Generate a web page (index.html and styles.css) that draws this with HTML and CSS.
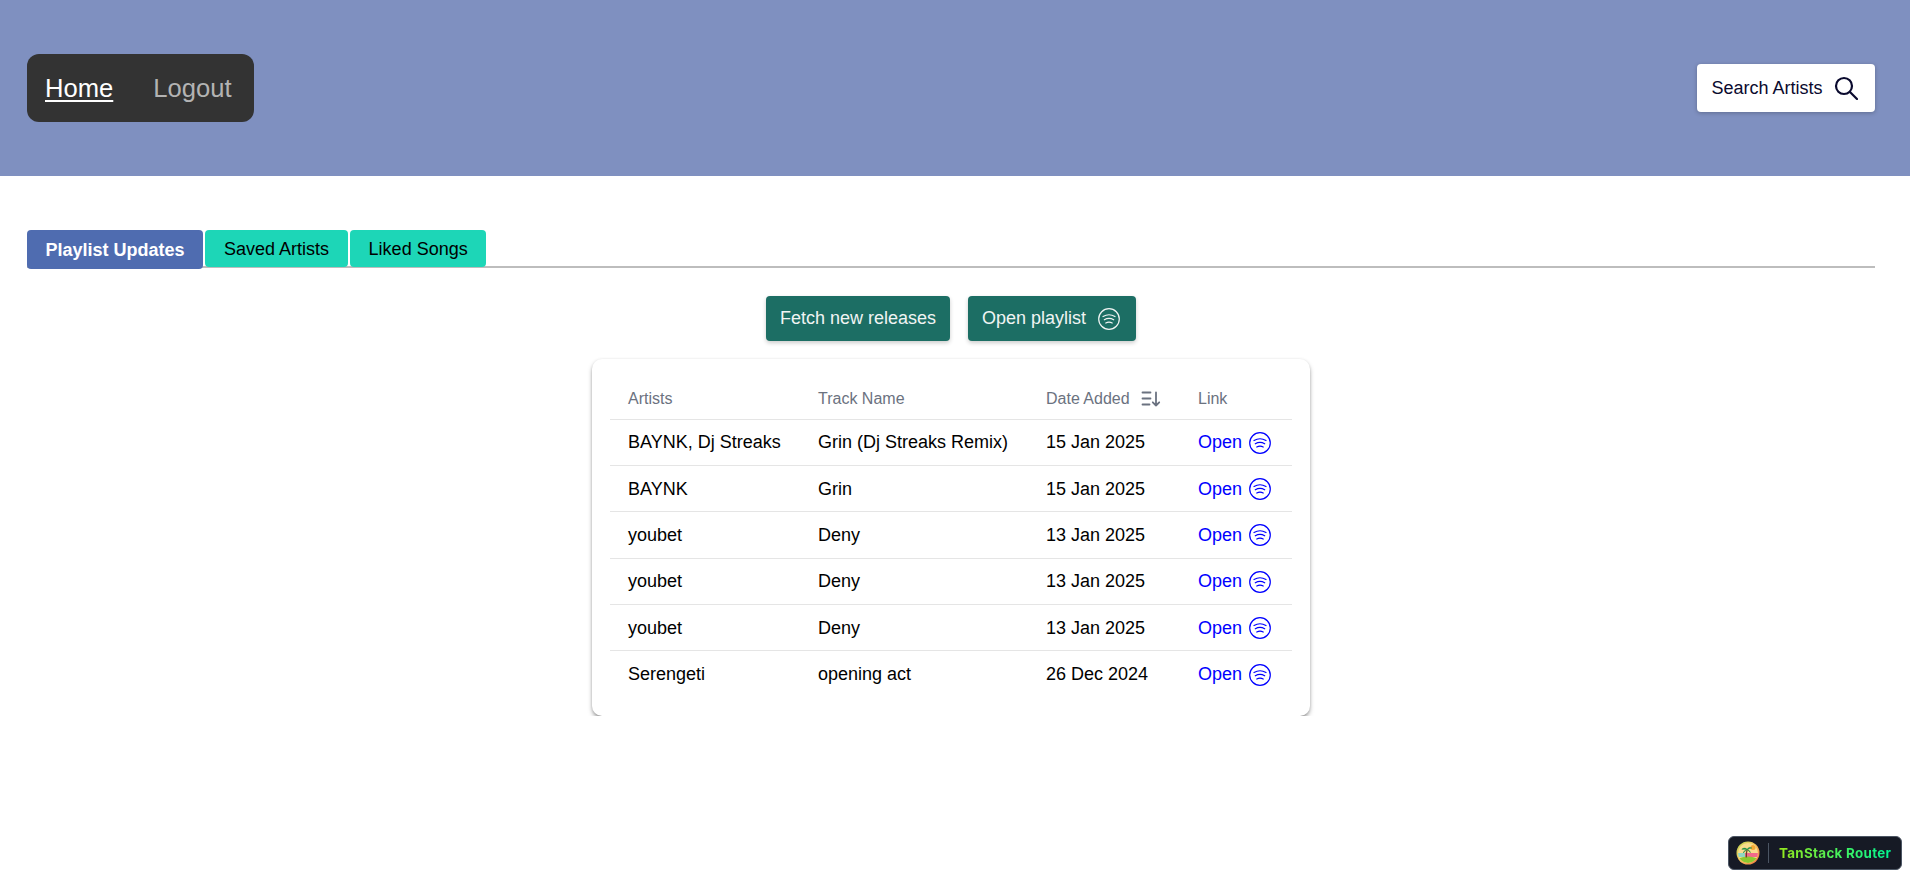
FILE: index.html
```html
<!DOCTYPE html>
<html lang="en">
<head>
    <meta charset="UTF-8">
    <title>Playlist Updates</title>
    <link rel="stylesheet" href="styles.css">
</head>
<body>

    <!-- Header Section -->
    <header class="top-bar">
        <nav class="main-nav">
            <a href="#" class="active">Home</a>
            <a href="#">Logout</a>
        </nav>
        <button class="search-btn" type="button">
            Search Artists
            <svg width="24" height="24" viewBox="0 0 24 24" fill="none" stroke="currentColor" stroke-width="2.200" stroke-linecap="round"><circle cx="10" cy="10" r="8"/><path d="M16 16l7 7"/></svg>
        </button>
    </header>

    <!-- Tabs -->
    <main class="content">
        <div class="tabs">
            <button class="tab tab-active" type="button">Playlist Updates</button>
            <button class="tab" type="button">Saved Artists</button>
            <button class="tab tab-last" type="button">Liked Songs</button>
        </div>

        <div class="actions">
            <button class="action-btn" type="button">Fetch new releases</button>
            <button class="action-btn open-btn" type="button">
                Open playlist
                <svg class="spotify" viewBox="0 0 24 24" fill="none" stroke="currentColor" stroke-width="1.200" stroke-linecap="round"><circle cx="12" cy="12" r="10.300"/><path d="M6 9.500c3.800-2.200 8.200-2.200 12 0M7.300 12.800c3-1.700 6.400-1.700 9.400 0M8.800 16c2-1.100 4.400-1.100 6.400 0"/></svg>
            </button>
        </div>

        <!-- Results table -->
        <div class="table-card">
            <table>
                <thead>
                    <tr>
                        <th class="col-artist">Artists</th>
                        <th class="col-track">Track Name</th>
                        <th class="col-date">
                            <span class="sort-head">Date Added
                                <svg width="20" height="20" viewBox="0 0 20 20" fill="none" stroke="currentColor" stroke-width="1.800" stroke-linecap="round" stroke-linejoin="round"><path d="M1.500 3.500h8M1.500 9.500h8M1.500 15.500h7M15 3.500v13M11.800 13.300l3.200 3.200 3.200-3.200"/></svg>
                            </span>
                        </th>
                        <th>Link</th>
                    </tr>
                </thead>
                <tbody id="rows"></tbody>
            </table>
        </div>
    </main>

    <!-- Router devtools badge -->
    <button class="router-badge" type="button">
        <svg class="badge-logo" width="24" height="24" viewBox="0 0 24 24">
            <defs>
                <linearGradient id="sky" x1="0" y1="0" x2="1" y2="1">
                    <stop offset="0" stop-color="#b5d850"/>
                    <stop offset="0.45" stop-color="#f7c860"/>
                    <stop offset="1" stop-color="#f0703c"/>
                </linearGradient>
                <clipPath id="disc"><circle cx="12" cy="12" r="10"/></clipPath>
            </defs>
            <circle cx="12" cy="12" r="11.500" fill="url(#sky)"/>
            <g clip-path="url(#disc)">
                <rect width="24" height="24" fill="#f9dc8c"/>
                <rect x="9" y="12" width="15" height="4" fill="#f2688a"/>
                <rect y="12" width="9" height="4" fill="#8fd8c0"/>
                <circle cx="17" cy="6.500" r="2.500" fill="#f6a935"/>
                <path d="M2 18c5-3.500 15-3.500 20 0v6H2z" fill="#8cc92e"/>
            </g>
            <path d="M10.300 16.500c-.2-3 .1-5.500 .9-8" stroke="#6a4020" stroke-width="1.200" fill="none"/>
            <path d="M11.200 8.500c-1.800-2-3.900-1.600-5.400-.2 1.700-.2 3.400 .1 5.400 .2zM11.200 8.500c.9-2.200 2.900-2.400 4.700-1.500-1.600 .1-3.100 .6-4.700 1.500zM11.200 8.500c-2 .4-3.400 1.500-3.900 3.500 1.200-1.400 2.400-2.500 3.900-3.500zM11.200 8.500c1.500 .3 2.800 1.400 3.200 3.200-1-1.300-2-2.300-3.200-3.200z" fill="#1f8f45" stroke="#1f8f45" stroke-width=".5"/>
        </svg>
        <span class="badge-sep"></span>
        <span class="badge-text">TanStack Router</span>
    </button>

    <script>
        const rows = [
            ['BAYNK, Dj Streaks', 'Grin (Dj Streaks Remix)', '15 Jan 2025'],
            ['BAYNK', 'Grin', '15 Jan 2025'],
            ['youbet', 'Deny', '13 Jan 2025'],
            ['youbet', 'Deny', '13 Jan 2025'],
            ['youbet', 'Deny', '13 Jan 2025'],
            ['Serengeti', 'opening act', '26 Dec 2024']
        ];

        const icon = document.querySelector('.spotify').outerHTML;
        let html = '';
        rows.forEach(row => {
            html += `<tr>
                <td>${row[0]}</td>
                <td>${row[1]}</td>
                <td>${row[2]}</td>
                <td><a href="#" class="open-link">Open ${icon}</a></td>
            </tr>`;
        });
        document.getElementById('rows').innerHTML = html;
    </script>
</body>
</html>
```

FILE: styles.css
```css
* {
    box-sizing: border-box;
}

body {
    font-family: "Liberation Sans", Arial, sans-serif;
    background-color: #fff;
    color: #000;
    margin: 0;
}

button {
    font-family: inherit;
    cursor: pointer;
}

.top-bar {
    background-color: #7f90c0;
    height: 176px;
    padding: 0 35px 0 27px;
    display: flex;
    justify-content: space-between;
    align-items: center;
}

.main-nav {
    background-color: #333;
    border-radius: 12px;
    height: 68px;
    padding: 0 22px 0 18px;
    display: flex;
    align-items: center;
    gap: 40px;
    font-size: 25.600px;
}

.main-nav a {
    color: #b3b3b3;
    text-decoration: none;
}

.main-nav a.active {
    color: #fff;
    text-decoration: underline;
    text-decoration-thickness: 2px;
    text-underline-offset: 3px;
}

.search-btn {
    background-color: #fff;
    color: #0a0a2e;
    border: none;
    border-radius: 4px;
    height: 48px;
    width: 178px;
    padding: 0 17px 0 14.500px;
    font-size: 18px;
    display: flex;
    align-items: center;
    justify-content: space-between;
    box-shadow: 0 1px 4px rgba(0, 0, 0, 0.25);
}

.content {
    padding: 54px 35px 0 27px;
}

.tabs {
    display: flex;
    align-items: flex-start;
    gap: 2px;
    height: 38px;
    border-bottom: 2px solid #bdbdbd;
}

.tab {
    background-color: #1dd6b7;
    color: #000;
    border: none;
    border-radius: 4px;
    height: 37px;
    padding: 2px 19px 0;
    font-size: 18px;
    flex-shrink: 0;
}

.tab-last {
    padding: 2px 18.500px 0;
}

.tab-active {
    background-color: #4f6cb0;
    color: #fff;
    font-weight: bold;
    height: 39px;
    padding: 2px 18.500px 0;
}

.actions {
    display: flex;
    justify-content: center;
    gap: 18px;
    margin-top: 28px;
}

.action-btn {
    background-color: #1c6e64;
    color: #f0f4f3;
    border: none;
    border-radius: 4px;
    height: 45px;
    padding: 0 14px;
    font-size: 18px;
    display: flex;
    align-items: center;
    gap: 11px;
    box-shadow: 0 2px 4px rgba(0, 0, 0, 0.2);
}

.open-btn {
    padding-right: 15px;
}

.spotify {
    width: 24px;
    height: 24px;
}

.table-card {
    width: 718px;
    margin: 18px auto 0;
    padding: 18px 18px 19px;
    background-color: #fff;
    border-radius: 10px;
    box-shadow: 0 3px 5px -1px rgba(0, 0, 0, 0.5), 0 0 3px rgba(0, 0, 0, 0.08);
}

table {
    width: 100%;
    table-layout: fixed;
    border-collapse: collapse;
    font-size: 18px;
}

th {
    color: #6b7280;
    font-size: 16px;
    font-weight: normal;
    text-align: left;
    height: 42px;
    padding: 2px 18px 0;
}

td {
    height: 46.400px;
    padding: 1px 18px 0;
    border-top: 1px solid #e5e5e5;
    white-space: nowrap;
}

.col-artist {
    width: 190px;
}

.col-track {
    width: 228px;
}

.col-date {
    width: 152px;
}

.sort-head {
    display: flex;
    align-items: center;
    gap: 11px;
    white-space: nowrap;
}

.open-link {
    color: #00f;
    text-decoration: none;
    display: flex;
    align-items: center;
    gap: 6px;
}

.router-badge {
    position: fixed;
    right: 8px;
    bottom: 7px;
    width: 174px;
    height: 34px;
    background-color: #161a25;
    border: 1px solid #4b5563;
    border-radius: 6px;
    padding: 0 8px 0 7px;
    display: flex;
    align-items: center;
}

.badge-logo {
    flex-shrink: 0;
}

.badge-sep {
    width: 1px;
    height: 20px;
    background-color: #4b5563;
    margin: 0 10px 0 8px;
}

.badge-text {
    font-family: Inter, sans-serif;
    font-size: 13.400px;
    font-weight: 700;
    letter-spacing: 0.3px;
    white-space: nowrap;
    background: linear-gradient(to right, #96ea1e, #00f792);
    -webkit-background-clip: text;
    background-clip: text;
    color: transparent;
}
```
